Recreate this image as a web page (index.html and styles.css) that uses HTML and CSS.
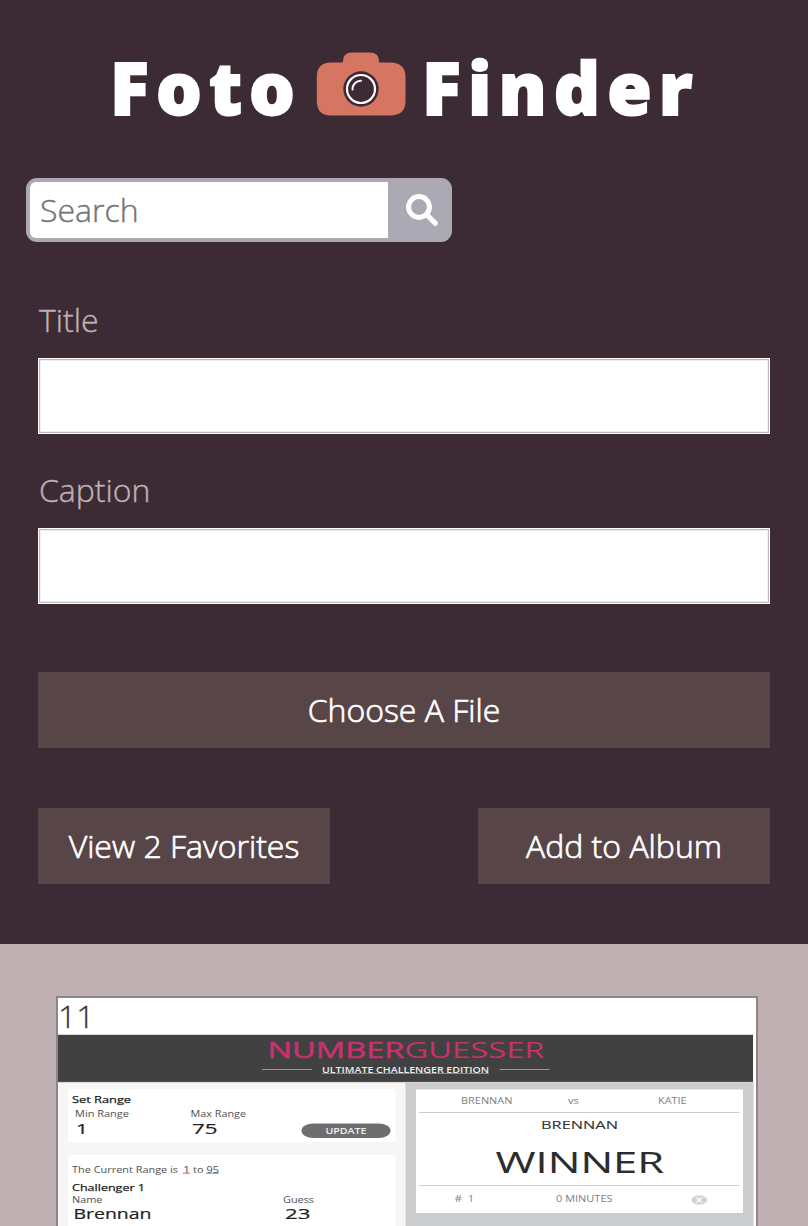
FILE: index.html
```html
<!DOCTYPE html>
<html lang="en">
<head>
<meta charset="utf-8">
<title>Foto Finder</title>
<link rel="stylesheet" href="styles.css">
</head>
<body>
<header class="header">
  <h1 class="logo">
    <span class="word foto">Foto</span>
    <svg class="camera" viewBox="0 0 90 64" aria-hidden="true">
      <path fill="#d57562" d="M15 10.500H27V9Q27 .5 36 .5H54Q63 .5 63 9V10.500H74Q89.500 10.500 89.500 25V49Q89.500 63.500 74 63.500H15Q.8 63.500 .8 49V25Q.8 10.500 15 10.500Z"/>
      <circle cx="45" cy="37" r="17.700" fill="#3c2b35"/>
      <circle cx="45" cy="37" r="14" fill="none" stroke="#fff" stroke-width="2.200"/>
      <path d="M36.500 37.500A8.500 8.500 0 0 1 45 28.700" fill="none" stroke="#fff" stroke-width="2" stroke-linecap="round"/>
    </svg>
    <span class="word finder">Finder</span>
  </h1>
  <form class="search">
    <input class="search-input" type="text" placeholder="Search">
    <button class="search-button" type="button" aria-label="Search">
      <svg class="search-icon" viewBox="0 0 32 32"><circle cx="13" cy="13" r="10.400" fill="none" stroke="#fff" stroke-width="5"/><path d="M21.500 21.500L29.200 29.200" stroke="#fff" stroke-width="5.200" stroke-linecap="round"/></svg>
    </button>
  </form>
  <form class="upload">
    <label class="label" for="title">Title</label>
    <input class="field" id="title" type="text">
    <label class="label" for="caption">Caption</label>
    <input class="field" id="caption" type="text">
    <button class="button choose" type="button">Choose A File</button>
    <div class="actions">
      <button class="button" type="button">View 2 Favorites</button>
      <button class="button" type="button">Add to Album</button>
    </div>
  </form>
</header>
<main class="album">
  <article class="card">
    <h2 class="card-title">11</h2>
    <svg class="photo" viewBox="58 1034 698 192">
      <rect x="58" y="1034" width="696" height="192" fill="#f6f6f7"/>
      <rect x="58" y="1035" width="695" height="47" fill="#414141"/>
      <rect x="405.500" y="1082" width="348" height="144" fill="#cbccce"/>
      <path d="M58 1034.500H754M58 1082.400H754" stroke="#d4d4d4"/>
      <rect x="68" y="1089" width="327.500" height="53" fill="#fff"/>
      <rect x="68" y="1155" width="327.500" height="71" fill="#fff"/>
      <rect x="416" y="1089.500" width="327" height="123.500" fill="#fff"/>
      <path d="M262 1069.500H312M499.500 1069.500H549.500" stroke="#999"/>
      <path d="M322 1073.500H489" stroke="#888"/>
      <path d="M419 1112.500H739.500M419 1185.500H739.500" stroke="#ccc"/>
      <text x="267.500" y="1057.500" class="brand semi" textLength="137" lengthAdjust="spacingAndGlyphs">NUMBER</text>
      <text x="404.500" y="1057.500" class="brand" textLength="140" lengthAdjust="spacingAndGlyphs">GUESSER</text>
      <text x="322" y="1072.500" class="edition" textLength="167" lengthAdjust="spacingAndGlyphs">ULTIMATE CHALLENGER EDITION</text>
      <text x="72" y="1102.500" class="small dark" textLength="59" lengthAdjust="spacingAndGlyphs">Set Range</text>
      <text x="75" y="1116.700" class="small" textLength="54" lengthAdjust="spacingAndGlyphs">Min Range</text>
      <text x="190.500" y="1116.700" class="small" textLength="55.500" lengthAdjust="spacingAndGlyphs">Max Range</text>
      <text x="76" y="1133.500" class="value" textLength="12" lengthAdjust="spacingAndGlyphs">1</text>
      <text x="192" y="1133.500" class="value" textLength="25.500" lengthAdjust="spacingAndGlyphs">75</text>
      <rect x="301.500" y="1123.500" width="89" height="14.500" rx="12" ry="7.250" fill="#6e6e6e"/>
      <text x="325.500" y="1133.500" class="update" textLength="41" lengthAdjust="spacingAndGlyphs">UPDATE</text>
      <text x="72" y="1172.500" class="small" textLength="106" lengthAdjust="spacingAndGlyphs">The Current Range is</text>
      <text x="183" y="1172.500" class="small" textLength="7" lengthAdjust="spacingAndGlyphs">1</text>
      <text x="193" y="1172.500" class="small" textLength="10.500" lengthAdjust="spacingAndGlyphs">to</text>
      <text x="206.500" y="1172.500" class="small" textLength="12.500" lengthAdjust="spacingAndGlyphs">95</text>
      <path d="M183 1173.200H190M206 1173.200H219" stroke="#666" stroke-width=".8"/>
      <text x="72" y="1190.500" class="small dark" textLength="73" lengthAdjust="spacingAndGlyphs">Challenger 1</text>
      <text x="72" y="1202.500" class="small" textLength="30.500" lengthAdjust="spacingAndGlyphs">Name</text>
      <text x="283" y="1202.500" class="small" textLength="31" lengthAdjust="spacingAndGlyphs">Guess</text>
      <text x="73.500" y="1219.300" class="value" textLength="78" lengthAdjust="spacingAndGlyphs">Brennan</text>
      <text x="285" y="1219.300" class="value" textLength="25.500" lengthAdjust="spacingAndGlyphs">23</text>
      <text x="461" y="1103.500" class="small grey" textLength="51.500" lengthAdjust="spacingAndGlyphs">BRENNAN</text>
      <text x="568" y="1103.500" class="small grey" textLength="11" lengthAdjust="spacingAndGlyphs">vs</text>
      <text x="658" y="1103.500" class="small grey" textLength="28.500" lengthAdjust="spacingAndGlyphs">KATIE</text>
      <text x="541" y="1128.800" class="name" textLength="77" lengthAdjust="spacingAndGlyphs">BRENNAN</text>
      <text x="495.500" y="1173" class="winner" textLength="168.500" lengthAdjust="spacingAndGlyphs">WINNER</text>
      <text x="454.500" y="1202" class="small grey" textLength="7.500" lengthAdjust="spacingAndGlyphs">#</text>
      <text x="468" y="1202" class="small grey" textLength="6" lengthAdjust="spacingAndGlyphs">1</text>
      <text x="556" y="1202" class="small grey" textLength="56.500" lengthAdjust="spacingAndGlyphs">0 MINUTES</text>
      <ellipse cx="699.300" cy="1200" rx="8" ry="4.700" fill="#d3d3d3"/>
      <path d="M696.500 1197.500L702 1202.500M702 1197.500L696.500 1202.500" stroke="#fff" stroke-width="1.300"/>
    </svg>
  </article>
</main>
</body>
</html>
```
FILE: styles.css
```css
* { box-sizing: border-box; }
body {
  margin: 0;
  background: #bfb1b3;
  color: #3c2b35;
  font-family: "Open Sans", sans-serif;
  font-size: 32px;
  font-weight: 300;
}
.header { height: 944px; background: #3c2b35; }
.logo {
  display: flex;
  height: 178px;
  margin: 0;
  padding: 52px 0 0 110px;
  color: #fff;
  font-size: 72px;
  font-weight: 800;
  line-height: 70px;
}
.word { letter-spacing: 7.1px; white-space: nowrap; -webkit-text-stroke: 1.8px #fff; }
.foto { width: 206px; }
.finder { margin-left: 16px; }
.camera { width: 90px; height: 64px; flex: none; }
.search {
  display: flex;
  width: 426px;
  height: 64px;
  margin-left: 26px;
  padding: 4px;
  border-radius: 11px;
  background: #aba9b4;
}
.search-input {
  width: 358px;
  padding: 0 10px 2px;
  border: 0;
  border-radius: 6px 0 0 6px;
  background: #fff;
  font: inherit;
}
.search-input::placeholder { color: #757575; -webkit-text-stroke: .4px #757575; }
.search-button { display: flex; flex: 1; padding: 12px 0 0 18px; border: 0; background: none; }
.search-icon { width: 32px; height: 32px; }
.upload { padding: 56px 38px 0; }
.label { display: block; height: 60px; padding-left: 1px; color: #bfb1b3; line-height: 43px; -webkit-text-stroke: .4px #bfb1b3; }
.field {
  display: block;
  width: 100%;
  height: 76px;
  margin-bottom: 34px;
  border: 1px solid #fff;
  background: #fff;
  box-shadow: inset 0 0 0 1px #bbb, inset 0 0 0 2px #eee;
}
.button {
  width: 292px;
  height: 76px;
  padding: 0 0 2px;
  border: 0;
  background: #584547;
  color: #fff;
  font: inherit;
  -webkit-text-stroke: .7px #fff;
}
.choose { display: block; width: 100%; margin-top: 68px; }
.actions { display: flex; justify-content: space-between; margin-top: 60px; }
.album { padding: 52px 50px 0 56px; }
.card { width: 702px; border: 2px solid #938484; border-bottom: 0; background: #fff; }
.card-title { height: 36px; margin: 0; font-size: 32px; font-weight: 300; line-height: 35px; -webkit-text-stroke: .3px #3c2b35; }
.photo { display: block; width: 698px; height: 192px; }
.photo text { font-weight: 400; }
.brand { fill: #c9316d; font-size: 22px; }
.photo .semi { stroke: #c9316d; stroke-width: .5px; }
.photo .edition { fill: #eee; font-size: 9px; font-weight: 600; }
.photo .update { fill: #eee; font-size: 8.8px; font-weight: 600; }
.small { fill: #505050; font-size: 8.8px; }
.photo .dark { fill: #222; font-size: 9.5px; stroke: #222; stroke-width: .25px; }
.photo .value { fill: #222; font-size: 14.5px; stroke: #222; stroke-width: .2px; }
.photo .grey { fill: #808080; }
.name { fill: #333; font-size: 11.5px; stroke: #333; stroke-width: .1px; }
.winner { fill: #2c2c2c; font-size: 28.5px; stroke: #2c2c2c; stroke-width: .1px; }
```
